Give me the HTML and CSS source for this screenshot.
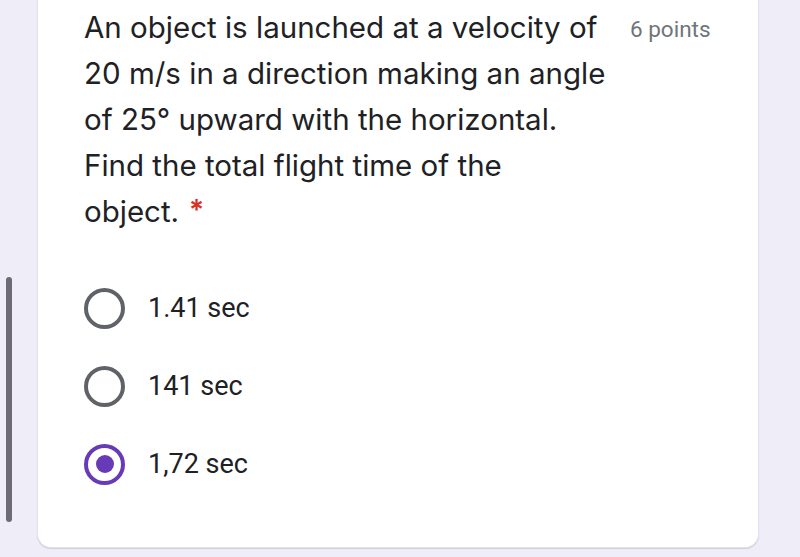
FILE: index.html
```html
<!DOCTYPE html>
<html lang="en">
<head>
<meta charset="utf-8">
<title>Question</title>
<link rel="stylesheet" href="styles.css">
</head>
<body>
<div class="page">
  <div class="gutter"><div class="scroll-thumb"></div></div>
  <div class="card">
    <div class="question-head">
      <div class="question-text">An object is launched at a velocity of 20 m/s in a direction making an angle of 25° upward with the horizontal. Find the total flight time of the <span class="last-word">object.<span class="required">*</span></span></div>
      <div class="points">6 points</div>
    </div>
    <div class="options">
      <label class="option"><span class="radio"></span><span class="option-label">1.41 sec</span></label>
      <label class="option"><span class="radio"></span><span class="option-label">141 sec</span></label>
      <label class="option"><span class="radio radio-checked"><span class="radio-dot"></span></span><span class="option-label">1,72 sec</span></label>
    </div>
  </div>
</div>
</body>
</html>
```
FILE: styles.css
```css
html, body {
  margin: 0;
  padding: 0;
  background: #efedf7;
}
body {
  width: 800px;
  height: 557px;
  overflow: hidden;
}
.page {
  display: flex;
  align-items: flex-start;
  padding-right: 41px;
}
.gutter {
  width: 37px;
  flex: none;
}
.scroll-thumb {
  margin-top: 277px;
  margin-left: 6px;
  width: 6px;
  height: 245px;
  border-radius: 3px;
  background: #6e6a78;
}
.card {
  flex: 1;
  height: 548px;
  box-sizing: border-box;
  background: #ffffff;
  border: 1px solid #e3e1ea;
  border-top: none;
  border-radius: 0 0 14px 14px;
  box-shadow: 0 1px 1px rgba(60, 60, 80, 0.18);
  padding: 4px 0 0 46px;
}
.question-head {
  display: flex;
  align-items: flex-start;
}
.question-text {
  width: 528px;
  flex: none;
  font-family: "Inter", "Roboto", sans-serif;
  font-size: 29.5px;
  line-height: 46px;
  color: #202124;
}
.last-word {
  white-space: nowrap;
}
.required {
  display: inline-block;
  margin-left: 10px;
  color: #d93025;
  font-size: 28px;
  font-weight: 600;
  line-height: 24px;
  vertical-align: 2px;
}
.points {
  margin-left: 18px;
  padding-top: 2px;
  font-family: "Roboto", sans-serif;
  font-size: 22.5px;
  line-height: 46px;
  color: #70757a;
}
.options {
  display: flex;
  flex-direction: column;
  margin-top: 35px;
}
.option {
  display: flex;
  align-items: center;
  height: 78px;
}
.radio {
  width: 41px;
  height: 41px;
  box-sizing: border-box;
  border: 4.5px solid #5f6368;
  border-radius: 50%;
  display: flex;
  align-items: center;
  justify-content: center;
  flex: none;
}
.radio-checked {
  border-color: #673ab7;
}
.radio-dot {
  width: 18px;
  height: 18px;
  border-radius: 50%;
  background: #673ab7;
}
.option-label {
  margin-left: 23px;
  font-family: "Roboto", sans-serif;
  font-size: 27px;
  color: #202124;
}
```
